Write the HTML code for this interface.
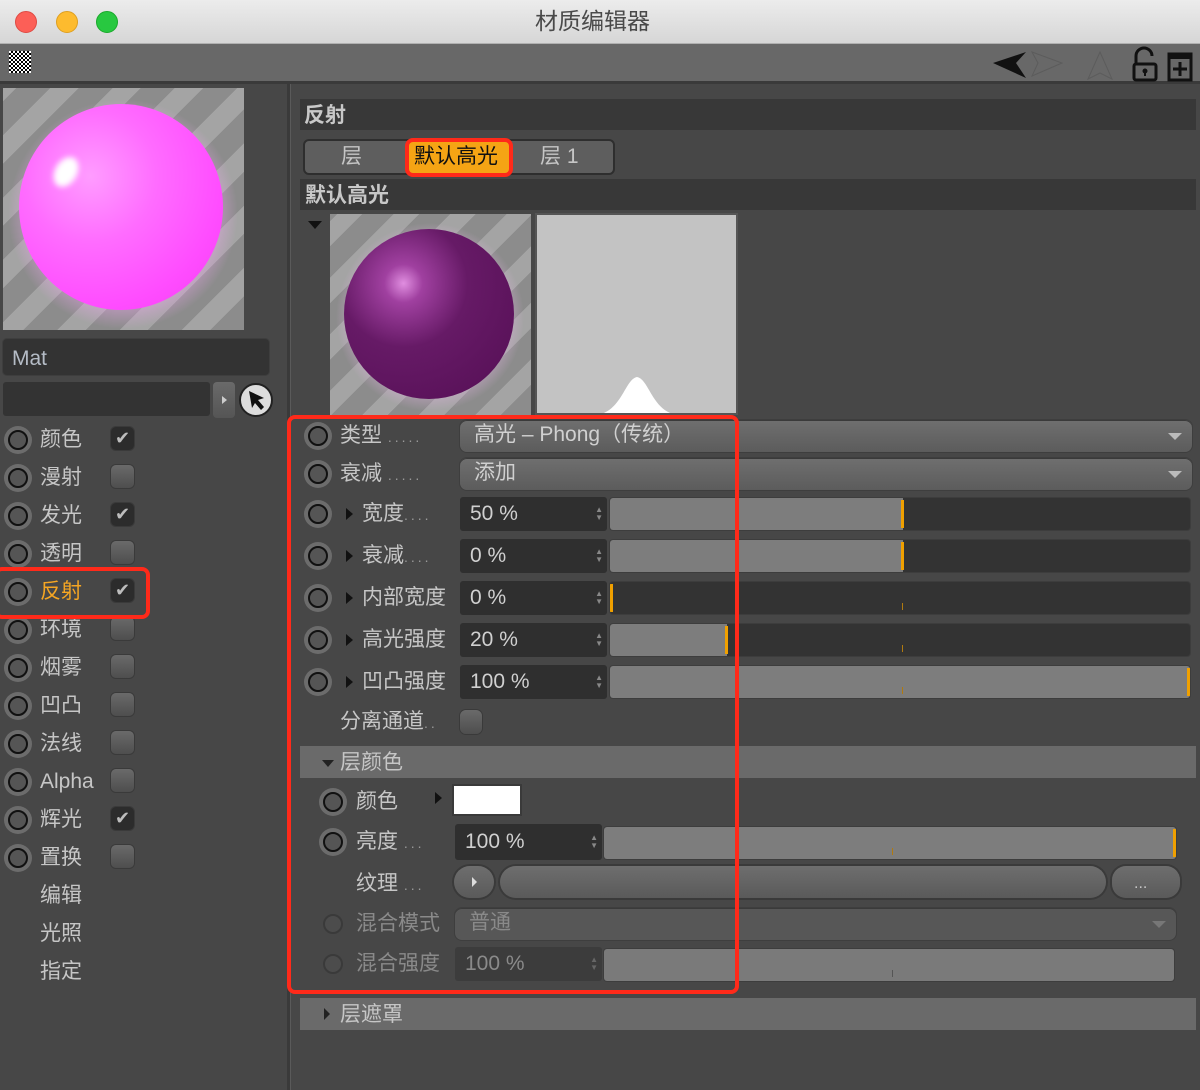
<!DOCTYPE html>
<html><head><meta charset="utf-8">
<style>
*,*::before,*::after{margin:0;padding:0;box-sizing:border-box}
body{width:1200px;height:1090px;overflow:hidden;background:#474747;font-family:"Liberation Sans","Noto Sans CJK SC",sans-serif;color:#c6c6c6;position:relative}
.a{position:absolute}
.t{position:absolute;font-size:21px;line-height:24px;white-space:nowrap}
.radio{position:absolute;width:28px;height:28px;border-radius:50%;background:#6c6c6c}
.radio::after{content:"";position:absolute;left:4px;top:4px;width:20px;height:20px;border-radius:50%;border:2px solid #111;background:#555}
.radio.dim{background:transparent}
.radio.dim::after{border-color:#3a3a3a;background:#4c4c4c}
.cb{position:absolute;width:23px;height:23px;border-radius:5px;background:linear-gradient(#6a6a6a,#4e4e4e);box-shadow:0 0 0 1px #3a3a3a}
.cb.on{background:#2c2c2c}
.cb.on::after{content:"✔";position:absolute;left:4px;top:0px;font-size:18px;line-height:22px;color:#bdbdbd}
.dd{position:absolute;height:32px;border-radius:7px;background:linear-gradient(#6f6f6f,#5c5c5c);box-shadow:0 1px 0 #3a3a3a inset,0 0 0 1px #3e3e3e}
.dd .arr{position:absolute;right:10px;top:13px;width:0;height:0;border-left:7px solid transparent;border-right:7px solid transparent;border-top:7px solid #bbb}
.num{position:absolute;height:34px;background:#2f2f2f;border-radius:3px}
.num .sp{position:absolute;right:4px;top:9px;font-size:8px;line-height:8px;color:#888}
.bar{position:absolute;height:32px;background:#333;border-radius:3px;overflow:hidden;box-shadow:0 0 0 1px #3d3d3d}
.bar .f{position:absolute;left:0;top:0;bottom:0;background:#7d7d7d}
.bar .o{position:absolute;top:2px;bottom:2px;width:3px;background:#f0a000}
.bar .tk{position:absolute;bottom:4px;height:7px;width:1px;background:#b07a10}
.tri{position:absolute;width:0;height:0;border-top:6px solid transparent;border-bottom:6px solid transparent;border-left:7px solid #111}
.dots{color:#9a9a9a;font-size:14px;letter-spacing:3px}
</style></head><body>
<div class="a" style="left:0;top:0;width:1200px;height:44px;background:linear-gradient(#ececec,#d6d6d6);border-bottom:1px solid #b0b0b0"></div>
<div class="a" style="left:15px;top:11px;width:22px;height:22px;border-radius:50%;background:#fc5f57;border:1px solid #de4a43"></div>
<div class="a" style="left:56px;top:11px;width:22px;height:22px;border-radius:50%;background:#fdbb2e;border:1px solid #de9f1f"></div>
<div class="a" style="left:96px;top:11px;width:22px;height:22px;border-radius:50%;background:#28c840;border:1px solid #1aa92b"></div>
<div class="t" style="left:535px;top:9px;font-size:23px;color:#4a4a4a">材质编辑器</div>
<div class="a" style="left:0;top:44px;width:1200px;height:40px;background:#686868;border-bottom:3px solid #3a3a3a"></div>
<div class="a" style="left:9px;top:51px;width:22px;height:22px;background:repeating-conic-gradient(#000 0 25%,#fff 0 50%) 0 0/4px 4px"></div>
<svg class="a" style="left:990px;top:46px" width="210" height="36" viewBox="0 0 210 36">
<path d="M3 17 L36 6 L26 17 L36 32 Z" fill="#111"/>
<path d="M42 6 L72 17 L42 30 L48 17 Z" fill="none" stroke="#5c5c5c" stroke-width="1"/>
<path d="M110 6 L98 33 L110 27 L122 33 Z" fill="none" stroke="#5c5c5c" stroke-width="1"/>
<path d="M146 18 V10 a8 8 0 0 1 16 0" fill="none" stroke="#111" stroke-width="3"/>
<rect x="144" y="18" width="22" height="16" rx="2" fill="none" stroke="#111" stroke-width="3"/>
<circle cx="155" cy="25" r="2.5" fill="#111"/><rect x="154" y="25" width="2" height="5" fill="#111"/>
<rect x="179" y="8" width="22" height="26" fill="none" stroke="#111" stroke-width="3"/>
<rect x="179" y="8" width="22" height="5" fill="#111"/>
<path d="M190 16 V30 M183 23 H197" stroke="#111" stroke-width="3"/>
</svg>
<div class="a" style="left:287px;top:84px;width:4px;height:1006px;background:#3a3a3a;border-right:1px solid #5a5a5a"></div>
<div class="a" style="left:3px;top:88px;width:241px;height:242px;overflow:hidden;background:repeating-linear-gradient(-45deg,#8c8c8c 0 24px,#a4a4a4 24px 44px)">
 <div class="a" style="left:4px;top:10px;width:232px;height:232px;border-radius:50%;background:radial-gradient(circle,rgba(255,170,255,.7) 45%,rgba(220,160,220,0) 70%)"></div>
 <div class="a" style="left:16px;top:16px;width:204px;height:206px;border-radius:50%;background:radial-gradient(circle at 35% 35%,#ff9cff 0,#ff6cff 35%,#ff4cff 70%,#f23df0 100%)"></div>
 <div class="a" style="left:52px;top:68px;width:22px;height:32px;border-radius:50%;background:#fff;filter:blur(3px);transform:rotate(30deg)"></div>
</div>
<div class="a" style="left:3px;top:339px;width:266px;height:36px;background:#333;border-radius:4px;box-shadow:0 0 0 1px #3e3e3e"></div>
<div class="t" style="left:12px;top:347px;color:#b5bcc6">Mat</div>
<div class="a" style="left:3px;top:382px;width:207px;height:34px;background:#333;border-radius:3px"></div>
<div class="a" style="left:213px;top:382px;width:22px;height:36px;background:linear-gradient(#6a6a6a,#555);border-radius:4px"></div>
<div class="a" style="left:222px;top:396px;width:0;height:0;border-top:4px solid transparent;border-bottom:4px solid transparent;border-left:5px solid #ccc"></div>
<div class="a" style="left:239px;top:383px;width:34px;height:34px;border-radius:50%;background:#ddd;border:2px solid #222"></div>
<svg class="a" style="left:239px;top:383px" width="34" height="34"><path d="M10 8 L25 15 L19 17 L25 24 L22 27 L16 20 L13 25 Z" fill="#111"/></svg>
<div class="radio" style="left:4px;top:426px"></div><div class="t" style="left:40px;top:428px">颜色</div><div class="cb on" style="left:111px;top:427px"></div>
<div class="radio" style="left:4px;top:464px"></div><div class="t" style="left:40px;top:466px">漫射</div><div class="cb" style="left:111px;top:465px"></div>
<div class="radio" style="left:4px;top:502px"></div><div class="t" style="left:40px;top:504px">发光</div><div class="cb on" style="left:111px;top:503px"></div>
<div class="radio" style="left:4px;top:540px"></div><div class="t" style="left:40px;top:542px">透明</div><div class="cb" style="left:111px;top:541px"></div>
<div class="radio" style="left:4px;top:578px"></div><div class="t" style="left:40px;top:580px;color:#f5a623">反射</div><div class="cb on" style="left:111px;top:579px"></div>
<div class="radio" style="left:4px;top:616px"></div><div class="t" style="left:40px;top:618px">环境</div><div class="cb" style="left:111px;top:617px"></div>
<div class="radio" style="left:4px;top:654px"></div><div class="t" style="left:40px;top:656px">烟雾</div><div class="cb" style="left:111px;top:655px"></div>
<div class="radio" style="left:4px;top:692px"></div><div class="t" style="left:40px;top:694px">凹凸</div><div class="cb" style="left:111px;top:693px"></div>
<div class="radio" style="left:4px;top:730px"></div><div class="t" style="left:40px;top:732px">法线</div><div class="cb" style="left:111px;top:731px"></div>
<div class="radio" style="left:4px;top:768px"></div><div class="t" style="left:40px;top:770px">Alpha</div><div class="cb" style="left:111px;top:769px"></div>
<div class="radio" style="left:4px;top:806px"></div><div class="t" style="left:40px;top:808px">辉光</div><div class="cb on" style="left:111px;top:807px"></div>
<div class="radio" style="left:4px;top:844px"></div><div class="t" style="left:40px;top:846px">置换</div><div class="cb" style="left:111px;top:845px"></div>
<div class="t" style="left:40px;top:884px">编辑</div>
<div class="t" style="left:40px;top:922px">光照</div>
<div class="t" style="left:40px;top:960px">指定</div>
<div class="a" style="left:-6px;top:567px;width:156px;height:52px;border:4px solid #ff2a1a;border-radius:8px"></div>
<div class="a" style="left:300px;top:99px;width:896px;height:31px;background:#383838"></div>
<div class="t" style="left:304px;top:104px;font-weight:bold;color:#c8c8c8">反射</div>
<div class="a" style="left:303px;top:139px;width:312px;height:36px;background:#5e5e5e;border:2px solid #2e2e2e;border-radius:6px"></div>
<div class="t" style="left:341px;top:145px">层</div>
<div class="t" style="left:540px;top:145px">层 1</div>
<div class="a" style="left:405px;top:138px;width:108px;height:39px;background:#f5a414;border:4px solid #ff2a1a;border-radius:8px"></div>
<div class="t" style="left:414px;top:145px;color:#111">默认高光</div>
<div class="a" style="left:300px;top:179px;width:896px;height:31px;background:#383838"></div>
<div class="t" style="left:305px;top:184px;font-weight:bold;color:#c8c8c8">默认高光</div>
<div class="a" style="left:308px;top:221px;width:0;height:0;border-left:7px solid transparent;border-right:7px solid transparent;border-top:8px solid #111"></div>
<div class="a" style="left:330px;top:214px;width:201px;height:202px;overflow:hidden;background:repeating-linear-gradient(-45deg,#8c8c8c 0 22px,#a4a4a4 22px 40px)">
 <div class="a" style="left:5px;top:8px;width:190px;height:190px;border-radius:50%;background:radial-gradient(circle,rgba(230,180,230,.8) 45%,rgba(220,160,220,0) 70%)"></div>
 <div class="a" style="left:14px;top:15px;width:170px;height:170px;border-radius:50%;background:radial-gradient(circle at 35% 32%,#e08ee0 0,#a040a0 12%,#661a66 40%,#5a125a 80%,#4a0a4a 100%)"></div>
</div>
<div class="a" style="left:535px;top:213px;width:203px;height:202px;background:#c3c3c3;border:2px solid #555;overflow:hidden">
 <svg class="a" style="left:0;top:0" width="200" height="200"><path d="M60 200 C85 196 88 164 100 162 C112 164 115 196 140 200 Z" fill="#fff"/></svg>
</div>
<div class="radio" style="left:304px;top:422px"></div><div class="t" style="left:340px;top:424px">类型 <span class="dots">.....</span></div>
<div class="dd" style="left:460px;top:420px;width:732px"><span class="t" style="left:14px;top:3px;color:#d0d0d0">高光 – Phong（传统）</span><span class="arr"></span></div>
<div class="radio" style="left:304px;top:460px"></div><div class="t" style="left:340px;top:462px">衰减 <span class="dots">.....</span></div>
<div class="dd" style="left:460px;top:458px;width:732px"><span class="t" style="left:14px;top:3px;color:#d0d0d0">添加</span><span class="arr"></span></div>
<div class="radio" style="left:304px;top:500px"></div><div class="tri" style="left:346px;top:508px"></div><div class="t" style="left:362px;top:502px">宽度<span class="dots">....</span></div>
<div class="num" style="left:460px;top:497px;width:147px"><span class="t" style="left:10px;top:5px;color:#d0d0d0">50 %</span><span class="sp">▲<br>▼</span></div>
<div class="bar" style="left:610px;top:498px;width:580px"><div class="f" style="width:293px"></div><div class="o" style="left:291px"></div></div>
<div class="radio" style="left:304px;top:542px"></div><div class="tri" style="left:346px;top:550px"></div><div class="t" style="left:362px;top:544px">衰减<span class="dots">....</span></div>
<div class="num" style="left:460px;top:539px;width:147px"><span class="t" style="left:10px;top:5px;color:#d0d0d0">0 %</span><span class="sp">▲<br>▼</span></div>
<div class="bar" style="left:610px;top:540px;width:580px"><div class="f" style="width:293px"></div><div class="o" style="left:291px"></div></div>
<div class="radio" style="left:304px;top:584px"></div><div class="tri" style="left:346px;top:592px"></div><div class="t" style="left:362px;top:586px">内部宽度</div>
<div class="num" style="left:460px;top:581px;width:147px"><span class="t" style="left:10px;top:5px;color:#d0d0d0">0 %</span><span class="sp">▲<br>▼</span></div>
<div class="bar" style="left:610px;top:582px;width:580px"><div class="o" style="left:0"></div><div class="tk" style="left:292px"></div></div>
<div class="radio" style="left:304px;top:626px"></div><div class="tri" style="left:346px;top:634px"></div><div class="t" style="left:362px;top:628px">高光强度</div>
<div class="num" style="left:460px;top:623px;width:147px"><span class="t" style="left:10px;top:5px;color:#d0d0d0">20 %</span><span class="sp">▲<br>▼</span></div>
<div class="bar" style="left:610px;top:624px;width:580px"><div class="f" style="width:117px"></div><div class="o" style="left:115px"></div><div class="tk" style="left:292px"></div></div>
<div class="radio" style="left:304px;top:668px"></div><div class="tri" style="left:346px;top:676px"></div><div class="t" style="left:362px;top:670px">凹凸强度</div>
<div class="num" style="left:460px;top:665px;width:147px"><span class="t" style="left:10px;top:5px;color:#d0d0d0">100 %</span><span class="sp">▲<br>▼</span></div>
<div class="bar" style="left:610px;top:666px;width:580px"><div class="f" style="width:580px"></div><div class="o" style="left:577px"></div><div class="tk" style="left:292px"></div></div>
<div class="t" style="left:340px;top:710px">分离通道<span class="dots">..</span></div>
<div class="a" style="left:460px;top:710px;width:22px;height:24px;border-radius:6px;background:linear-gradient(#6a6a6a,#4e4e4e);box-shadow:0 0 0 1px #3a3a3a"></div>
<div class="a" style="left:300px;top:746px;width:896px;height:32px;background:#6a6a6a"></div>
<div class="a" style="left:322px;top:760px;width:0;height:0;border-left:6px solid transparent;border-right:6px solid transparent;border-top:7px solid #222"></div>
<div class="t" style="left:340px;top:751px">层颜色</div>
<div class="radio" style="left:319px;top:788px"></div><div class="t" style="left:356px;top:790px">颜色</div>
<div class="tri" style="left:435px;top:792px"></div>
<div class="a" style="left:452px;top:784px;width:70px;height:32px;background:#fff;border:2px solid #3a3a3a"></div>
<div class="radio" style="left:319px;top:828px"></div><div class="t" style="left:356px;top:830px">亮度 <span class="dots">...</span></div>
<div class="num" style="left:455px;top:824px;width:147px;height:36px"><span class="t" style="left:10px;top:6px;color:#d0d0d0">100 %</span><span class="sp" style="top:10px">▲<br>▼</span></div>
<div class="bar" style="left:604px;top:827px;width:572px"><div class="f" style="width:572px"></div><div class="o" style="left:569px"></div><div class="tk" style="left:288px"></div></div>
<div class="t" style="left:356px;top:872px">纹理 <span class="dots">...</span></div>
<div class="a" style="left:454px;top:866px;width:40px;height:32px;border-radius:16px;background:linear-gradient(#6e6e6e,#5a5a5a);box-shadow:0 0 0 2px #3a3a3a"></div>
<div class="a" style="left:472px;top:877px;width:0;height:0;border-top:5px solid transparent;border-bottom:5px solid transparent;border-left:5px solid #ddd"></div>
<div class="a" style="left:500px;top:866px;width:606px;height:32px;border-radius:16px;background:linear-gradient(#6e6e6e,#5a5a5a);box-shadow:0 0 0 2px #3a3a3a"></div>
<div class="a" style="left:1112px;top:866px;width:68px;height:32px;border-radius:14px;background:linear-gradient(#6e6e6e,#5a5a5a);box-shadow:0 0 0 2px #3a3a3a"></div>
<div class="t" style="left:1134px;top:872px;font-size:16px">...</div>
<div class="radio dim" style="left:319px;top:910px"></div><div class="t" style="left:356px;top:912px;color:#8a8a8a">混合模式</div>
<div class="dd" style="left:455px;top:908px;width:721px;background:#575757"><span class="t" style="left:14px;top:3px;color:#8a8a8a">普通</span><span class="arr" style="border-top-color:#777"></span></div>
<div class="radio dim" style="left:319px;top:950px"></div><div class="t" style="left:356px;top:952px;color:#8a8a8a">混合强度</div>
<div class="num" style="left:455px;top:947px;width:147px;background:#3c3c3c"><span class="t" style="left:10px;top:5px;color:#8a8a8a">100 %</span><span class="sp" style="color:#666">▲<br>▼</span></div>
<div class="bar" style="left:604px;top:949px;width:570px;background:#7a7a7a"><div class="tk" style="left:288px;background:#555"></div></div>
<div class="a" style="left:287px;top:415px;width:452px;height:579px;border:4px solid #ff2a1a;border-radius:8px"></div>
<div class="a" style="left:300px;top:998px;width:896px;height:32px;background:#6a6a6a"></div>
<div class="a" style="left:324px;top:1008px;width:0;height:0;border-top:6px solid transparent;border-bottom:6px solid transparent;border-left:6px solid #222"></div>
<div class="t" style="left:340px;top:1003px">层遮罩</div>
</body></html>
